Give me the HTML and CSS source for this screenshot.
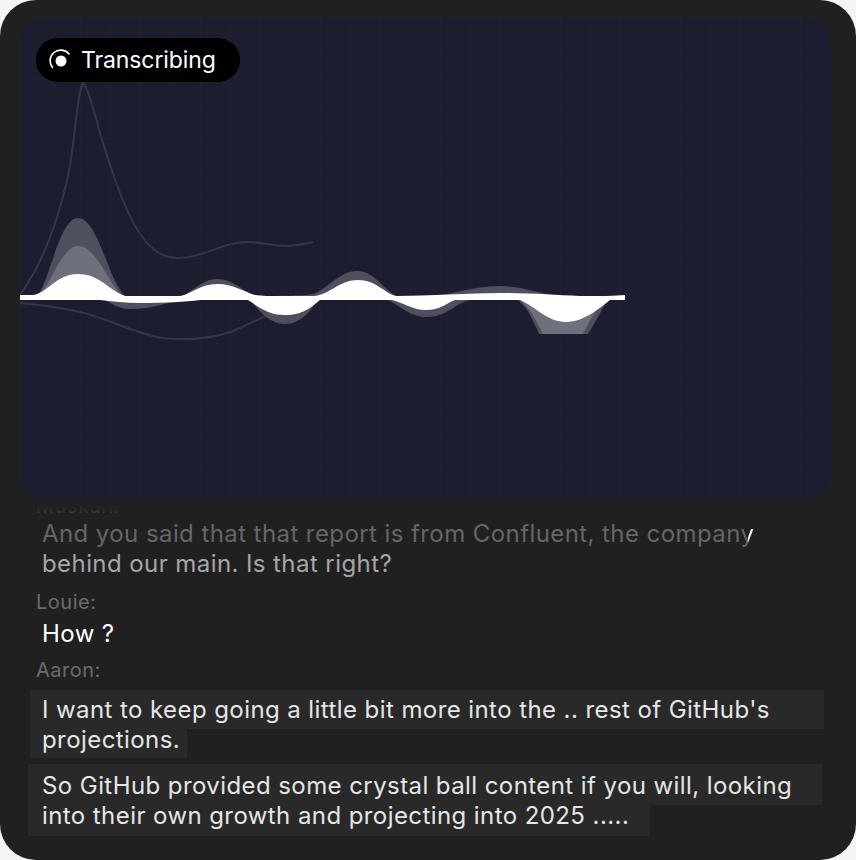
FILE: index.html
```html
<!DOCTYPE html>
<html lang="en">
<head>
    <meta charset="UTF-8">
    <meta name="viewport" content="width=device-width, initial-scale=1.0">
    <title>Transcribing</title>
    <link rel="stylesheet" href="styles.css">
</head>
<body>

    <div class="frame">
        <div class="wave-panel">
            <div class="status-pill">
                <svg class="status-icon" viewBox="0 0 24 24">
                    <circle cx="12" cy="12" r="5.5" fill="#fff"/>
                    <path d="M20 5A10.5 10.5 0 1 0 3.5 18.5" fill="none" stroke="#fff" stroke-width="1.6" stroke-linecap="round"/>
                </svg>
                <span>Transcribing</span>
            </div>
            <svg class="wave" viewBox="20 18 810 480">
                <path class="thin" d="M20 295C45 260 62 210 70 165C76 130 77 95 83 82C90 92 95 115 100 133C108 160 114 178 122 198C134 228 150 258 177 258C205 258 222 242 247 242C262 242 272 246 285 246C295 246 305 244 313 242"/>
                <path class="thin" d="M20 303C45 305 62 308 80 312C105 318 130 331 157 337C170 340 176 339 183 339C205 339 225 335 240 328C250 323 258 320 267 315"/>
                <path class="dark" d="M20 297H35C48 292 58 218 78 218C98 218 108 280 125 296C145 297 165 297 182 296C192 292 203 279 217 279C232 279 242 290 255 296C268 296 300 296 314 294C328 288 340 271 357 271C374 271 382 288 396 296C420 296 440 296 452 293C470 289 485 286 500 286C520 286 535 293 560 296H625V300H608C600 312 594 325 588 334H539C533 320 528 308 518 300H470C455 303 447 317 427 317C410 317 402 307 388 300H318C310 312 300 324 285 324C270 324 260 312 250 300H180C165 304 150 309 130 309C118 309 112 303 104 300H20Z"/>
                <path class="mid" d="M20 297H35C50 292 60 246 78 246C96 246 108 282 122 296H170V300H520C530 308 537 322 543 334H583C590 320 596 308 606 300H20Z"/>
                <path class="white" d="M20 295H33C48 293 56 274 78 274C100 274 108 290 125 296H180C192 294 200 284 217 284C234 284 244 292 255 295C262 296 270 296 280 296H315C330 294 340 280 358 280C376 280 384 293 396 296C430 296 470 293 500 293C530 293 555 295 580 296C600 296 615 296 625 295V300H610C602 306 585 322 566 322C547 322 535 306 520 300H455C445 304 440 310 426 310C412 310 402 302 392 300H320C310 308 303 315 285 315C267 315 258 306 248 300H200C185 302 165 303 140 303C125 303 112 301 100 300H20Z"/>
            </svg>
        </div>

        <div class="transcript">
            <div class="speaker muskan">Muskan:</div>
            <div class="line faded">And you said that that report is from Confluent, the compan<span class="last-letter">y</span></div>
            <div class="line soft">behind our main. Is that right?</div>

            <div class="speaker louie">Louie:</div>
            <div class="line">How ?</div>

            <div class="speaker aaron">Aaron:</div>
            <div class="para first">
                <div class="line lit wide">I want to keep going a little bit more into the .. rest of GitHub's</div>
                <div class="line lit short">projections.</div>
            </div>
            <div class="para second">
                <div class="line lit wide">So GitHub provided some crystal ball content if you will, looking</div>
                <div class="line lit medium">into their own growth and projecting into 2025 .....</div>
            </div>
        </div>
    </div>

</body>
</html>
```

FILE: styles.css
```css
* {
    box-sizing: border-box;
}
body {
    margin: 0;
    background: #f4f4f4;
    font-family: Inter, "Liberation Sans", sans-serif;
}
.frame {
    width: 856px;
    height: 860px;
    padding: 18px 26px 0 20px;
    background: #202020;
    border-radius: 36px;
    overflow: hidden;
}
.wave-panel {
    position: relative;
    width: 810px;
    height: 480px;
    background-color: #1c1e30;
    background-image:
        linear-gradient(90deg, rgba(255,255,255,0.012) 1px, transparent 1px),
        linear-gradient(rgba(255,255,255,0.008) 1px, transparent 1px);
    background-size: 30px 30px;
    border-radius: 22px;
    overflow: hidden;
}
.status-pill {
    position: absolute;
    top: 20px;
    left: 16px;
    z-index: 1;
    display: flex;
    align-items: center;
    gap: 8px;
    width: 204px;
    height: 44px;
    padding-left: 13px;
    background: #000;
    border-radius: 22px;
    color: #fff;
    font-size: 23px;
    letter-spacing: -0.1px;
}
.status-icon {
    width: 24px;
    height: 24px;
    margin-top: 1px;
}
.wave {
    display: block;
    width: 810px;
    height: 480px;
}
.thin {
    fill: none;
    stroke: #353747;
    stroke-width: 2;
}
.dark {
    fill: #4e5060;
}
.mid {
    fill: #6f707e;
}
.white {
    fill: #fff;
}
.transcript {
    height: 362px;
    margin-left: -20px;
    margin-right: -26px;
    padding: 0 30px;
    font-size: 24px;
    letter-spacing: 0.42px;
    color: #fff;
}
.speaker {
    padding-left: 6px;
    font-size: 20px;
    letter-spacing: 0.5px;
    color: #6c6c6c;
}
.muskan {
    height: 20px;
    line-height: 16px;
    background: linear-gradient(#202020 40%, #383838 75%);
    -webkit-background-clip: text;
    background-clip: text;
    color: transparent;
}
.louie {
    height: 30px;
    margin-top: 10px;
    line-height: 28px;
}
.aaron {
    height: 30px;
    margin-top: 8px;
    line-height: 28px;
}
.line {
    height: 30px;
    padding-left: 12px;
    line-height: 32px;
    white-space: nowrap;
}
.faded {
    color: #666;
}
.soft {
    color: #a6a6a6;
}
.last-letter {
    background: linear-gradient(90deg, #666 55%, #fff 55%);
    -webkit-background-clip: text;
    background-clip: text;
    color: transparent;
}
.para {
    margin-bottom: 6px;
}
.first {
    margin-top: 4px;
}
.second {
    margin-left: -2px;
}
.second .line {
    padding-left: 14px;
}
.lit {
    background: #292929;
    color: #e6e6e6;
}
.wide {
    width: 794px;
    height: 39px;
    padding-top: 4px;
}
.second .wide {
    height: 41px;
    padding-top: 6px;
}
.short {
    width: 157px;
    height: 29px;
    line-height: 22px;
}
.medium {
    width: 622px;
    height: 31px;
    line-height: 22px;
}
```
